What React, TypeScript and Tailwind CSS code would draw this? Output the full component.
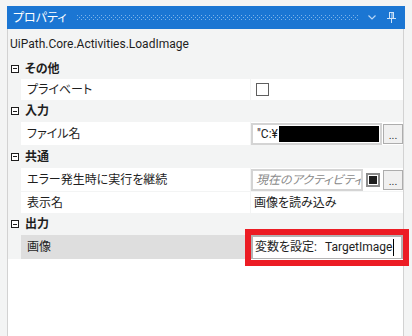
import React from "react";

function MinusBox() {
  return (
    <span className="ml-[3px] flex h-[8px] w-[8px] items-center justify-center border border-[#1e1e1e] bg-white">
      <span className="h-px w-[4px] bg-[#1e1e1e]" />
    </span>
  );
}

function Category({ label, h }: { label: string; h: string }) {
  return (
    <div className={`flex items-center font-bold ${h}`}>
      <MinusBox />
      <span className="ml-[6px]">{label}</span>
    </div>
  );
}

function Row({
  label,
  h,
  selected,
  children,
}: {
  label: string;
  h: string;
  selected?: boolean;
  children?: React.ReactNode;
}) {
  const bg = selected ? "bg-[#dedede]" : "bg-white";
  return (
    <div className={`ml-[13px] flex ${h}`}>
      <div className={`flex w-[229px] items-center pl-[6px] ${bg}`}>{label}</div>
      <div className="w-px" />
      <div className={`flex flex-1 items-center ${bg}`}>{children}</div>
    </div>
  );
}

function DotsButton({ h }: { h: string }) {
  return (
    <div
      className={`flex w-[20px] shrink-0 items-end justify-center border border-[#adadad] bg-[#f0f0f0] pb-[2px] text-[11px] leading-none text-[#333] ${h}`}
    >
      ...
    </div>
  );
}

export default function App() {
  return (
    <div className="relative h-[336px] w-[412px] overflow-hidden bg-[#f3f4f4] pl-[7px] pt-[6px] font-['Roboto','Noto_Sans_CJK_JP',sans-serif] text-[12px] text-[#1e1e1e] [font-feature-settings:'palt']">
      <div className="flex h-full w-[398px] flex-col">
        {/* header */}
        <div className="flex h-[23px] items-center bg-[#1b76d3] pl-[6px] pr-[9px] text-white">
          <span className="shrink-0 whitespace-nowrap">プロパティ</span>
          <div className="ml-[10px] flex h-[5px] min-w-0 flex-1">
            <svg width="100%" height="5">
              <defs>
                <pattern id="grip" width="4" height="4" patternUnits="userSpaceOnUse">
                  <rect x="0" y="0" width="1" height="1" fill="#7fb4ea" />
                  <rect x="2" y="2" width="1" height="1" fill="#7fb4ea" />
                </pattern>
              </defs>
              <rect width="100%" height="5" fill="url(#grip)" />
            </svg>
          </div>
          <svg className="ml-[10px] shrink-0" width="8" height="5" viewBox="0 0 8 5">
            <polyline points="0.5,0.5 4,4 7.5,0.5" fill="none" stroke="#b9d6f5" strokeWidth="1.2" />
          </svg>
          <svg className="ml-[11px] shrink-0" width="9" height="11" viewBox="0 0 9 11">
            <rect x="2.5" y="0.5" width="4" height="6" fill="none" stroke="#cfe3f8" />
            <rect x="4.5" y="1" width="1" height="5" fill="#cfe3f8" />
            <rect x="0" y="6" width="9" height="1" fill="#cfe3f8" />
            <rect x="4" y="7" width="1" height="4" fill="#cfe3f8" />
          </svg>
        </div>

        {/* body */}
        <div className="flex w-[397px] flex-1 flex-col border-x border-[#d2d2d2]">
          <div className="flex h-[29px] items-center pl-[2px]">UiPath.Core.Activities.LoadImage</div>

          <Category label="その他" h="h-[21px]" />
          <Row label="プライベート" h="h-[21px]">
            <span className="ml-[5px] h-[13px] w-[13px] border border-[#5f5f5f] bg-white" />
          </Row>

          <Category label="入力" h="h-[22px]" />
          <Row label="ファイル名" h="h-[23px]">
            <div className="flex h-[22px] w-[131px] items-center border-2 border-[#d4d4d4] bg-white pl-[4px]">
              <span>"C:¥</span>
              <span className="ml-[1px] h-[16px] w-[100px] bg-black" />
            </div>
            <div className="ml-[1px]">
              <DotsButton h="h-[20px]" />
            </div>
          </Row>

          <Category label="共通" h="h-[23px]" />
          <Row label="エラー発生時に実行を継続" h="h-[23px]">
            <div className="flex h-[22px] w-[112px] items-center overflow-hidden whitespace-nowrap border-2 border-[#d4d4d4] bg-white pl-[3px] italic text-[#8a8a8a]">
              現在のアクティビティから値を継承
            </div>
            <div className="ml-[3px] flex h-[14px] w-[14px] items-center justify-center border-2 border-[#8c8c8c] bg-white">
              <span className="h-[8px] w-[8px] bg-[#1e1e1e]" />
            </div>
            <div className="ml-[3px]">
              <DotsButton h="h-[20px]" />
            </div>
          </Row>
          <div className="h-px" />
          <Row label="表示名" h="h-[21px]">
            <span className="pl-[3px]">画像を読み込み</span>
          </Row>

          <Category label="出力" h="h-[22px]" />
          <Row label="画像" h="h-[24px]" selected>
            <div className="flex h-[25px] w-full items-center border-2 border-[#b3b3b3] bg-white pl-[2px]">
              <span>変数を設定:</span>
              <span className="ml-[8px]">TargetImage</span>
              <span className="ml-px h-[17px] w-px bg-black" />
            </div>
          </Row>

          <div className="flex-1 bg-white" />
        </div>
      </div>

      {/* red highlight annotation */}
      <div className="absolute left-[245px] top-[229px] h-[37px] w-[164px] border-[6px] border-[#ec1c24]" />
    </div>
  );
}
